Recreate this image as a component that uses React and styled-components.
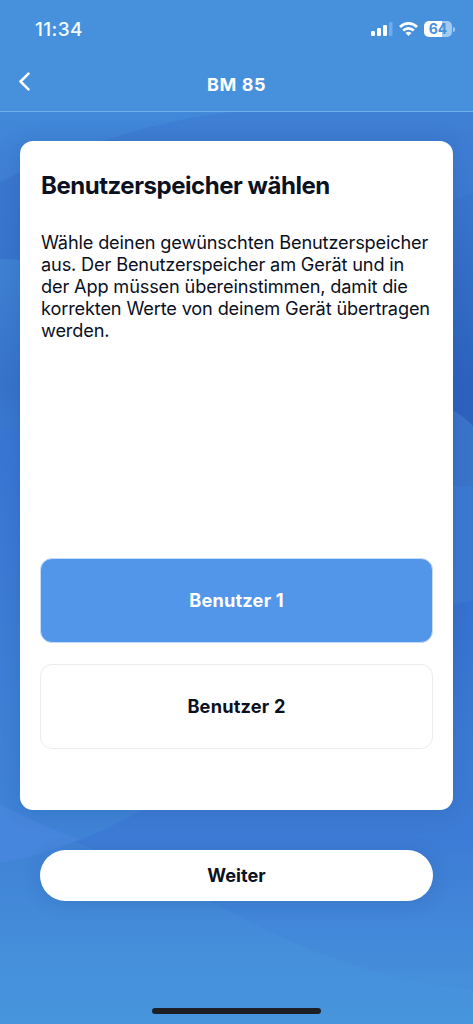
import React, { useState } from 'react'
import styled, { createGlobalStyle } from 'styled-components'

const GlobalStyle = createGlobalStyle`
  * {
    box-sizing: border-box;
  }

  body {
    margin: 0;
    font-family: Inter, 'Liberation Sans', sans-serif;
    color: #0b111f;
  }

  h1, h2, p {
    margin: 0;
  }

  button {
    font-family: inherit;
    color: inherit;
  }
`

const Screen = styled.div`
  position: relative;
  display: flex;
  flex-direction: column;
  height: 1024px;
  overflow: hidden;
  isolation: isolate;
`

const Backdrop = styled.svg`
  position: absolute;
  inset: 0;
  z-index: -1;
  width: 100%;
  height: 100%;
`

const Top = styled.div`
  height: 112px;
  background-color: #4791dc;
  border-bottom: 1px solid #74b0ea;
`

const StatusBar = styled.div`
  height: 58px;
  padding: 0 18px 0 35px;
  display: flex;
  align-items: center;
  justify-content: space-between;
  color: #f4fbff;
`

const Time = styled.span`
  font-size: 19px;
  font-weight: 500;
  letter-spacing: 0.4px;
`

const StatusIcons = styled.div`
  display: flex;
  align-items: center;
  gap: 6px;
`

const Battery = styled.div`
  display: flex;
  align-items: center;
  gap: 1px;
`

const BatteryBody = styled.div`
  width: 28px;
  height: 16px;
  border-radius: 5px;
  display: flex;
  align-items: center;
  justify-content: center;
  background: linear-gradient(90deg, #fff 64%, #a3caef 64%);
  color: #4791dc;
  font-size: 14px;
  font-weight: 700;
  line-height: 16px;
`

const BatteryCap = styled.div`
  width: 2px;
  height: 5px;
  border-radius: 0 2px 2px 0;
  background-color: #a3caef;
`

const Header = styled.header`
  height: 53px;
  padding: 0 18px;
  display: grid;
  grid-template-columns: 14px 1fr 14px;
  align-items: center;
`

const BackButton = styled.button`
  padding: 0 0 6px;
  border: 0;
  background: none;
  color: #fff;
  display: flex;
`

const HeaderTitle = styled.h1`
  text-align: center;
  color: #fff;
  font-size: 18px;
  font-weight: 700;
  letter-spacing: 0.6px;
`

const Card = styled.main`
  height: 669px;
  margin: 29px 20px 0;
  padding: 30px 20px 61px;
  display: flex;
  flex-direction: column;
  border-radius: 13px;
  background-color: #fff;
  box-shadow: 0 2px 22px rgba(20, 60, 120, 0.18);
`

const Heading = styled.h2`
  padding-left: 1px;
  font-size: 24px;
  font-weight: 700;
  line-height: 30px;
  letter-spacing: -0.46px;
`

const P = styled.p`
  margin-top: 30px;
  padding-left: 1px;
  font-size: 18.2px;
  line-height: 22px;
  letter-spacing: -0.16px;
  white-space: nowrap;
`

const UserList = styled.div`
  margin-top: auto;
  display: flex;
  flex-direction: column;
  gap: 21px;
`

const UserButton = styled.button`
  height: 85px;
  padding: 0 6px 2px;
  border: 1px solid ${(props) => (props.$active ? '#c5dcf8' : '#ececee')};
  border-radius: 12px;
  background-color: ${(props) => (props.$active ? '#5296ea' : '#fff')};
  color: ${(props) => (props.$active ? '#fff' : '#0b111f')};
  font-size: 18.2px;
  font-weight: 650;
  letter-spacing: 0.2px;
`

const NextButton = styled.button`
  height: 51px;
  margin: 40px 40px 0;
  padding: 0 6px 2px;
  border: 0;
  border-radius: 26px;
  background-color: #fff;
  font-size: 18.2px;
  font-weight: 650;
  box-shadow: 0 2px 18px rgba(20, 60, 120, 0.18);
`

const HomeIndicator = styled.div`
  width: 169px;
  height: 6px;
  margin: auto auto 10px;
  border-radius: 3px;
  background-color: #1c2025;
`

const users = ['Benutzer 1', 'Benutzer 2']

const lines = [
  'Wähle deinen gewünschten Benutzerspeicher',
  'aus. Der Benutzerspeicher am Gerät und in',
  'der App müssen übereinstimmen, damit die',
  'korrekten Werte von deinem Gerät übertragen',
  'werden.',
]

function Waves() {
  return (
    <Backdrop viewBox="0 0 473 1024" preserveAspectRatio="none">
      <defs>
        <linearGradient id="sky" x1="0" y1="0" x2="0" y2="1">
          <stop offset="0.1" stopColor="#428ad9" />
          <stop offset="0.17" stopColor="#3f80d5" />
          <stop offset="0.25" stopColor="#3777d0" />
          <stop offset="0.45" stopColor="#3976d4" />
          <stop offset="0.65" stopColor="#3d7fd6" />
          <stop offset="0.84" stopColor="#4084d6" />
          <stop offset="0.94" stopColor="#4690db" />
          <stop offset="1" stopColor="#4795dd" />
        </linearGradient>
        <linearGradient id="deep" x1="0" y1="0" x2="0" y2="1">
          <stop offset="0" stopColor="#3f80d5" />
          <stop offset="0.3" stopColor="#3a75cd" />
          <stop offset="0.85" stopColor="#2d63bf" />
          <stop offset="1" stopColor="#2d63bf" />
        </linearGradient>
        <linearGradient id="left" x1="0" y1="0" x2="0" y2="1">
          <stop offset="0" stopColor="#3f82d3" />
          <stop offset="0.75" stopColor="#3873ca" />
          <stop offset="1" stopColor="#3a78d2" />
        </linearGradient>
        <linearGradient id="low" x1="0" y1="0" x2="0" y2="1">
          <stop offset="0" stopColor="#3772d0" />
          <stop offset="0.35" stopColor="#3b7bd3" />
          <stop offset="0.62" stopColor="#3d7cd6" />
          <stop offset="1" stopColor="#4690db" />
        </linearGradient>
      </defs>
      <rect width="473" height="1024" fill="url(#sky)" />
      <path d="M0 182C80 145 150 122 230 112H473V430H60V300H0Z" fill="url(#deep)" />
      <path d="M0 182Q18 173 40 164V265H0Z" fill="#3a76cf" opacity="0.65" />
      <path d="M420 141H473V193Q463 196 453 200L420 220Z" fill="#3e7fd4" opacity="0.6" />
      <path d="M0 259Q18 259 40 262V430H0Z" fill="url(#left)" />
      <path d="M430 404Q454 406 473 426V490H430Z" fill="#3a75c9" />
      <path d="M430 486H473V600L430 610Z" fill="#3c7ad2" />
      <path
        d="M473 600L430 610L150 806Q110 828 75 842L93 849L210 901C290 945 370 980 473 990Z"
        fill="url(#low)"
      />
      <path d="M0 804C35 822 60 833 80 839C55 850 28 859 0 863Z" fill="#4686dc" />
    </Backdrop>
  )
}

function SignalIcon() {
  return (
    <svg width="22" height="14" viewBox="0 0 22 14" fill="#fff">
      <rect x="0" y="9" width="4" height="5" rx="1.2" />
      <rect x="6" y="6" width="4" height="8" rx="1.2" />
      <rect x="12" y="3" width="4" height="11" rx="1.2" />
      <rect x="18" y="0" width="3.5" height="14" rx="1.2" fill="#6caeee" />
    </svg>
  )
}

function WifiIcon() {
  return (
    <svg width="19" height="14" viewBox="0 0 19 14" fill="none" stroke="#fff" strokeWidth="2.7">
      <path d="M1 5C6 .2 13 .2 18 5" />
      <path d="M4.2 8.5C7.2 5.6 11.8 5.6 14.8 8.5" />
      <path d="M6.5 10.9Q9.5 8.5 12.5 10.9L9.5 14Z" fill="#fff" stroke="none" />
    </svg>
  )
}

function App() {
  const [selected, setSelected] = useState(users[0])

  return (
    <>
      <GlobalStyle />
      <Screen>
        <Waves />
        <Top>
          <StatusBar>
            <Time>11:34</Time>
            <StatusIcons>
              <SignalIcon />
              <WifiIcon />
              <Battery>
                <BatteryBody>64</BatteryBody>
                <BatteryCap />
              </Battery>
            </StatusIcons>
          </StatusBar>
          <Header>
            <BackButton aria-label="Zurück">
              <svg width="13" height="19" viewBox="0 0 13 19" fill="none">
                <path
                  d="M10.5 1.7L2.5 9.5L10.5 17.3"
                  stroke="#fff"
                  strokeWidth="2.5"
                  strokeLinecap="round"
                  strokeLinejoin="round"
                />
              </svg>
            </BackButton>
            <HeaderTitle>BM 85</HeaderTitle>
          </Header>
        </Top>
        <Card>
          <Heading>Benutzerspeicher wählen</Heading>
          <P>
            {lines.map((line) => (
              <React.Fragment key={line}>
                {line}
                <br />
              </React.Fragment>
            ))}
          </P>
          <UserList>
            {users.map((user) => (
              <UserButton
                key={user}
                $active={user === selected}
                onClick={() => setSelected(user)}
              >
                {user}
              </UserButton>
            ))}
          </UserList>
        </Card>
        <NextButton>Weiter</NextButton>
        <HomeIndicator />
      </Screen>
    </>
  )
}

export default App
